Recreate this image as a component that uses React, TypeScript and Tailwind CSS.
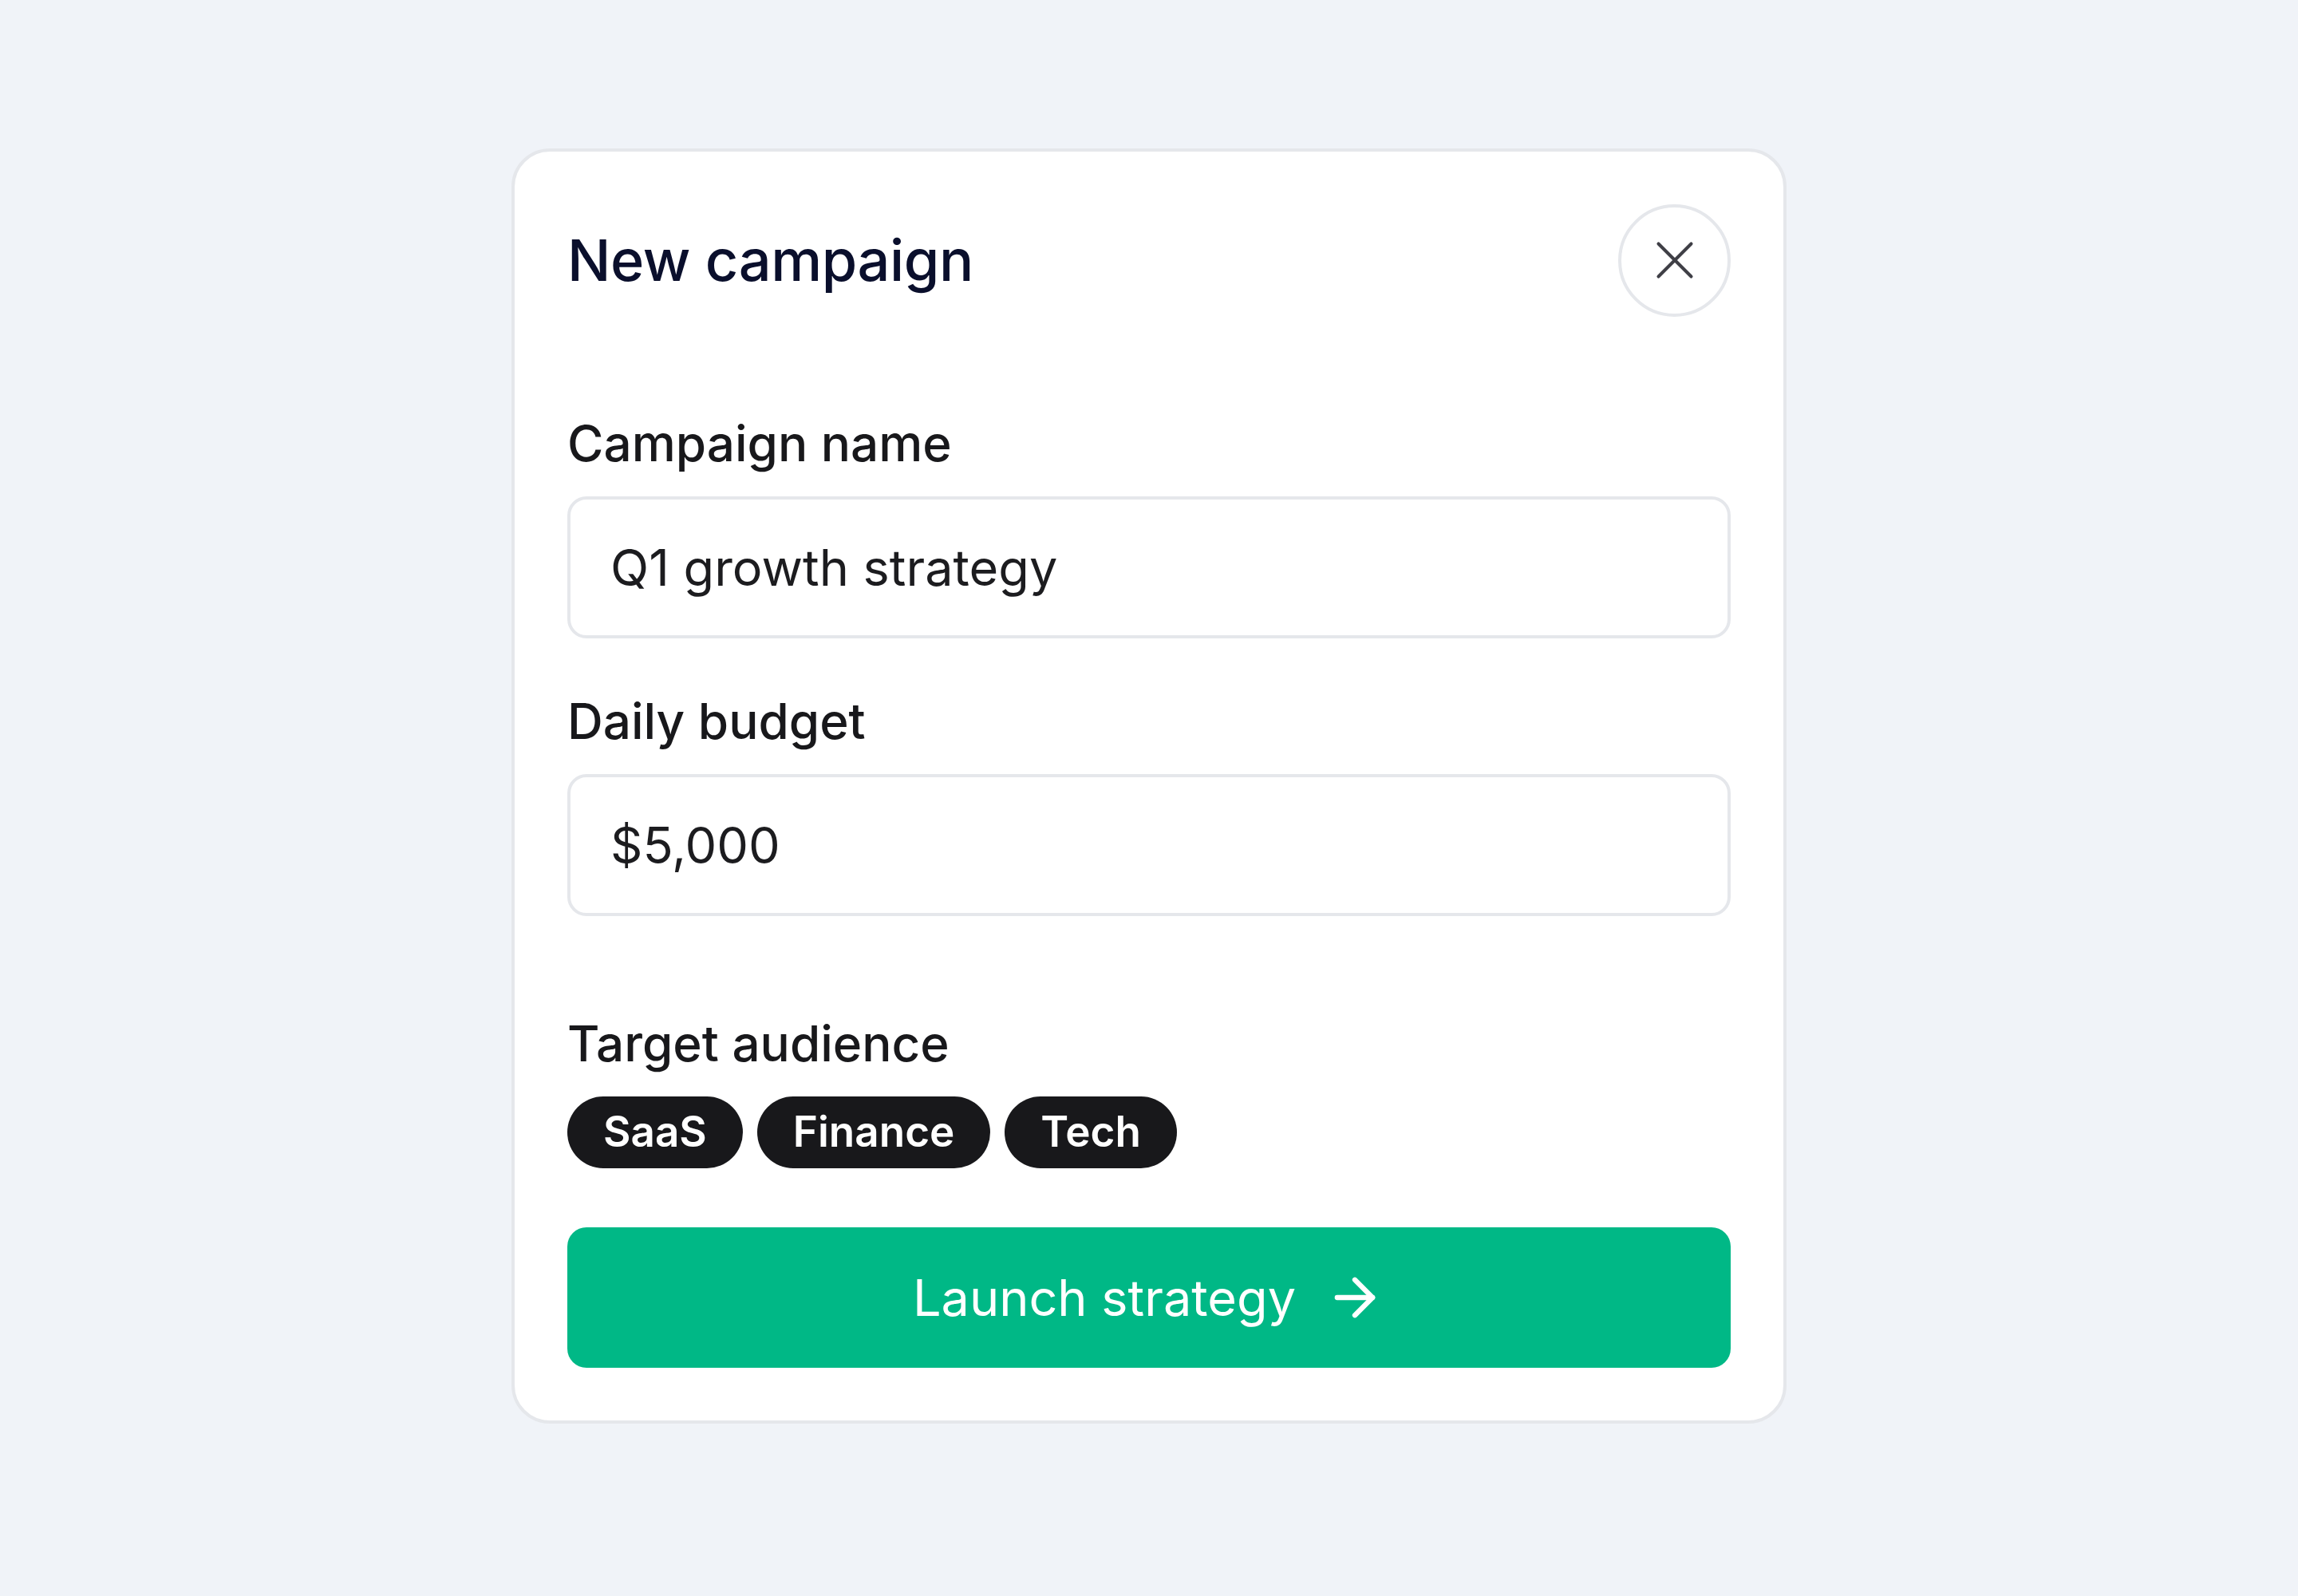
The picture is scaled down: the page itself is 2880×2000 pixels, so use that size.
import { ArrowRight, X } from 'lucide-react';

const audiences = ['SaaS', 'Finance', 'Tech'];

function Field({ label, value, className = '' }: { label: string; value: string; className?: string }) {
  return (
    <div className={className}>
      <label className="block text-[62px] leading-[76px] font-medium text-[#18181b]">{label}</label>
      <input
        readOnly
        defaultValue={value}
        className="mt-[28px] block w-full h-[178px] rounded-[24px] border-4 border-[#e5e7eb] bg-white px-[50px] text-[63px] text-[#1c1c1f] outline-none font-[Inter,sans-serif]"
      />
    </div>
  );
}

export default function App() {
  return (
    <div className="min-h-screen bg-[#f0f3f8] pt-[186px] flex justify-center font-[Inter,'Noto_Sans',sans-serif]">
      <div className="w-[1598px] h-fit bg-white border-4 border-[#e5e7eb] rounded-[48px] p-[66px]">
        <div className="flex items-center justify-between h-[140px]">
          <h2 className="text-[72px] font-medium text-[#0a0f2c] tracking-[-0.4px]">New campaign</h2>
          <button className="w-[141px] h-[141px] rounded-full border-4 border-[#e5e7eb] flex items-center justify-center text-[#3f3f46]">
            <X size={82} strokeWidth={1.2} />
          </button>
        </div>

        <Field label="Campaign name" value="Q1 growth strategy" className="mt-[122px]" />
        <Field label="Daily budget" value="$5,000" className="mt-[66px]" />

        <div className="mt-[122px]">
          <div className="text-[62px] leading-[76px] font-medium text-[#18181b]">Target audience</div>
          <div className="mt-[28px] flex gap-[18px]">
            {audiences.map((a) => (
              <span
                key={a}
                className="h-[90px] px-[45px] rounded-full bg-[#18181b] text-white text-[53px] font-semibold flex items-center"
              >
                {a}
              </span>
            ))}
          </div>
        </div>

        <button className="mt-[74px] w-full h-[176px] rounded-[24px] bg-[#00b886] text-white text-[63px] flex items-center justify-center gap-9">
          <span>Launch strategy</span>
          <ArrowRight size={76} strokeWidth={2} />
        </button>
      </div>
    </div>
  );
}
